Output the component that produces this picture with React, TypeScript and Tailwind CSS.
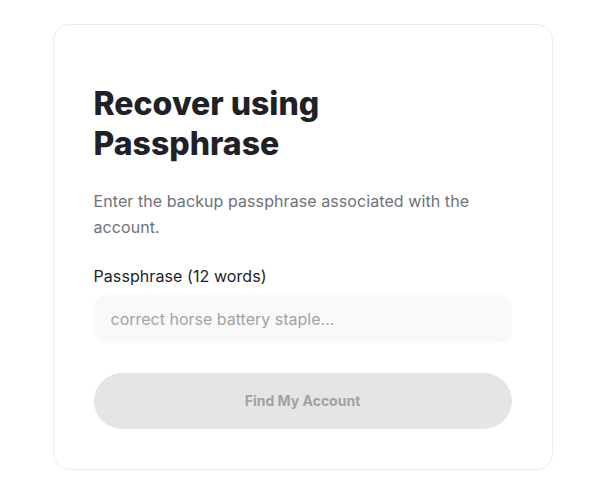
export default function App() {
  return (
    <div
      className="min-h-screen bg-white pt-6"
      style={{ fontFamily: "Inter, 'Noto Sans', sans-serif" }}
    >
      <div className="mx-auto w-[500px] rounded-2xl border border-[#ececec] bg-white px-10 pb-10 pt-[59px]">
        {/* Heading */}
        <h1 className="text-[32px] font-extrabold leading-[40px] text-[#1e2226]">
          Recover using
          <br />
          Passphrase
        </h1>
        <p className="mt-6 text-base leading-[26px] tracking-[0.005em] text-[#6e7179]">
          Enter the backup passphrase associated with the account.
        </p>

        {/* Passphrase field */}
        <label className="mt-6 block text-base leading-6 tracking-[0.005em] text-[#1e2226]">
          Passphrase (12 words)
        </label>
        <input
          type="text"
          placeholder="correct horse battery staple..."
          className="mt-[7px] h-12 w-full rounded-xl bg-[#f9f9f9] px-[17px] text-base text-[#1e2226] outline-none placeholder:text-[#a3a3a6]"
        />

        <button
          disabled
          className="mt-[30px] h-14 w-full rounded-full bg-[#e5e5e5] text-sm font-bold text-[#a2a2a6]"
        >
          Find My Account
        </button>
      </div>
    </div>
  );
}
